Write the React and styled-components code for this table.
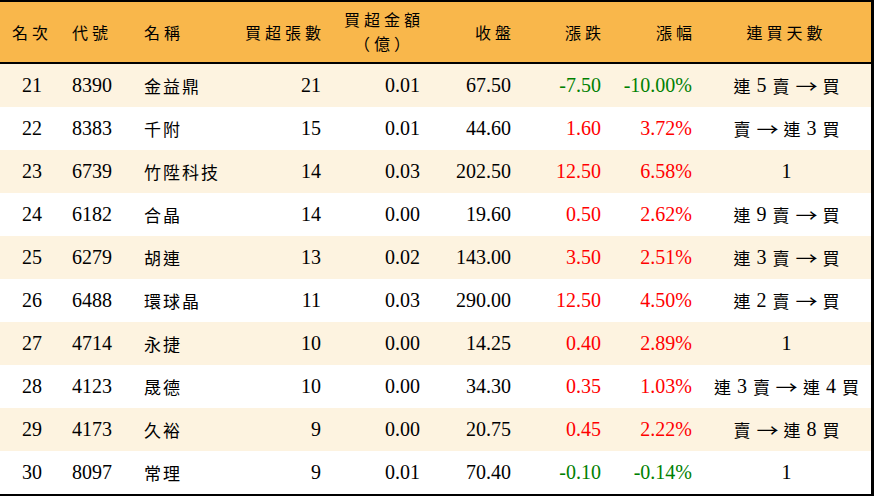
import React from 'react'
import styled, { createGlobalStyle } from 'styled-components'

const GlobalStyle = createGlobalStyle`
    html, body {
        margin: 0;
        padding: 0;
        background: #ffffff;
    }
`

const COLS = '64px 70px 96px 101px 99px 91px 90px 91px 1fr'

const columns = [
    { key: 'rank', label: '名次', align: 'center' },
    { key: 'code', label: '代號', align: 'left', pad: 8 },
    { key: 'name', label: '名稱', align: 'left', pad: 10 },
    { key: 'lots', label: '買超張數', align: 'right', pad: 10 },
    { key: 'amount', label: ['買超金額', '（億）'], align: 'right', pad: 10 },
    { key: 'close', label: '收盤', align: 'right', pad: 10 },
    { key: 'change', label: '漲跌', align: 'right', pad: 10 },
    { key: 'pct', label: '漲幅', align: 'right', pad: 10 },
    { key: 'streak', label: '連買天數', align: 'center' },
]

const rows = [
    ['21', '8390', '金益鼎', '21', '0.01', '67.50', '-7.50', '-10.00%', '連 5 賣 → 買'],
    ['22', '8383', '千附', '15', '0.01', '44.60', '1.60', '3.72%', '賣 → 連 3 買'],
    ['23', '6739', '竹陞科技', '14', '0.03', '202.50', '12.50', '6.58%', '1'],
    ['24', '6182', '合晶', '14', '0.00', '19.60', '0.50', '2.62%', '連 9 賣 → 買'],
    ['25', '6279', '胡連', '13', '0.02', '143.00', '3.50', '2.51%', '連 3 賣 → 買'],
    ['26', '6488', '環球晶', '11', '0.03', '290.00', '12.50', '4.50%', '連 2 賣 → 買'],
    ['27', '4714', '永捷', '10', '0.00', '14.25', '0.40', '2.89%', '1'],
    ['28', '4123', '晟德', '10', '0.00', '34.30', '0.35', '1.03%', '連 3 賣 → 連 4 買'],
    ['29', '4173', '久裕', '9', '0.00', '20.75', '0.45', '2.22%', '賣 → 連 8 買'],
    ['30', '8097', '常理', '9', '0.01', '70.40', '-0.10', '-0.14%', '1'],
]

const toneOf = (value) => (value.startsWith('-') ? 'down' : 'up')

const tokenKind = (t) => (/^\d+$/.test(t) ? 'num' : t === '→' ? 'arrow' : 'cjk')

function Streak({ text }) {
    const tokens = text.split(' ')
    return (
        <StreakLine>
            {tokens.map((t, i) => (
                <Token key={i} $kind={tokenKind(t)}>{t}</Token>
            ))}
        </StreakLine>
    )
}

export default function App() {
    return (
        <>
            <GlobalStyle />
            <Board>
                <HeaderRow>
                    {columns.map(col => (
                        <HeadCell key={col.key} $align={col.align} $pad={col.pad}>
                            {Array.isArray(col.label)
                                ? <Stack>{col.label.map(l => <span key={l}>{l}</span>)}</Stack>
                                : col.label}
                        </HeadCell>
                    ))}
                </HeaderRow>
                {rows.map((row, i) => (
                    <Row key={row[0]} $striped={i % 2 === 0}>
                        {row.map((value, j) => {
                            const col = columns[j]
                            const colored = col.key === 'change' || col.key === 'pct'
                            return (
                                <Cell
                                    key={col.key}
                                    $align={col.align}
                                    $pad={col.pad}
                                    $tone={colored ? toneOf(value) : null}
                                    $cjk={col.key === 'name'}
                                >
                                    {col.key === 'streak' ? <Streak text={value} /> : value}
                                </Cell>
                            )
                        })}
                    </Row>
                ))}
            </Board>
        </>
    )
}

const Board = styled.div`
    width: 874px;
    height: 496px;
    box-sizing: border-box;
    border-top: 2px solid #000;
    border-right: 3px solid #000;
    border-bottom: 2px solid #000;
    display: flex;
    flex-direction: column;
    font-family: "Liberation Serif", "Noto Sans CJK TC", serif;
    color: #000;
    overflow: hidden;
`

const HeaderRow = styled.div`
    display: grid;
    grid-template-columns: ${COLS};
    height: 60px;
    background: #f9b74b;
    border-bottom: 2px solid #000;
`

const Row = styled.div`
    display: grid;
    grid-template-columns: ${COLS};
    height: 43px;
    background: ${p => (p.$striped ? '#fdf3e0' : '#ffffff')};
`

const HeadCell = styled.div`
    display: flex;
    align-items: center;
    justify-content: ${p => p.$align === 'left' ? 'flex-start' : p.$align === 'right' ? 'flex-end' : 'center'};
    padding: ${p => p.$align === 'right' ? `0 ${p.$pad}px 0 0` : p.$align === 'left' ? `0 0 0 ${p.$pad}px` : '0'};
    font-family: "Noto Sans CJK TC", serif;
    font-size: 16px;
    letter-spacing: 4px;
    margin-right: ${p => p.$align === 'right' ? '-4px' : '0'};
`

const Stack = styled.div`
    display: flex;
    flex-direction: column;
    align-items: center;
    line-height: 24px;
    margin-top: -2px;
`

const Cell = styled.div`
    display: flex;
    align-items: center;
    justify-content: ${p => p.$align === 'left' ? 'flex-start' : p.$align === 'right' ? 'flex-end' : 'center'};
    padding: ${p => p.$align === 'right' ? `0 ${p.$pad}px 0 0` : p.$align === 'left' ? `0 0 0 ${p.$pad}px` : '0'};
    font-size: ${p => p.$cjk ? '17px' : '20px'};
    letter-spacing: ${p => p.$cjk ? '2px' : '0'};
    white-space: pre;
    color: ${p => p.$tone === 'down' ? '#008000' : p.$tone === 'up' ? '#ff0000' : '#000'};
`

const StreakLine = styled.div`
    display: flex;
    align-items: center;
    gap: 6px;
`

const Token = styled.span`
    font-size: ${p => p.$kind === 'num' ? '20px' : '17px'};
    font-family: ${p => p.$kind === 'num' ? '"Liberation Serif", serif' : '"Noto Sans CJK TC", sans-serif'};
    letter-spacing: ${p => p.$kind === 'cjk' ? '2px' : '0'};
    margin-right: ${p => p.$kind === 'cjk' ? '-2px' : '0'};
    ${p => p.$kind === 'arrow' && 'display: inline-block; margin: 0 2px; transform: scaleX(1.3);'}
`
